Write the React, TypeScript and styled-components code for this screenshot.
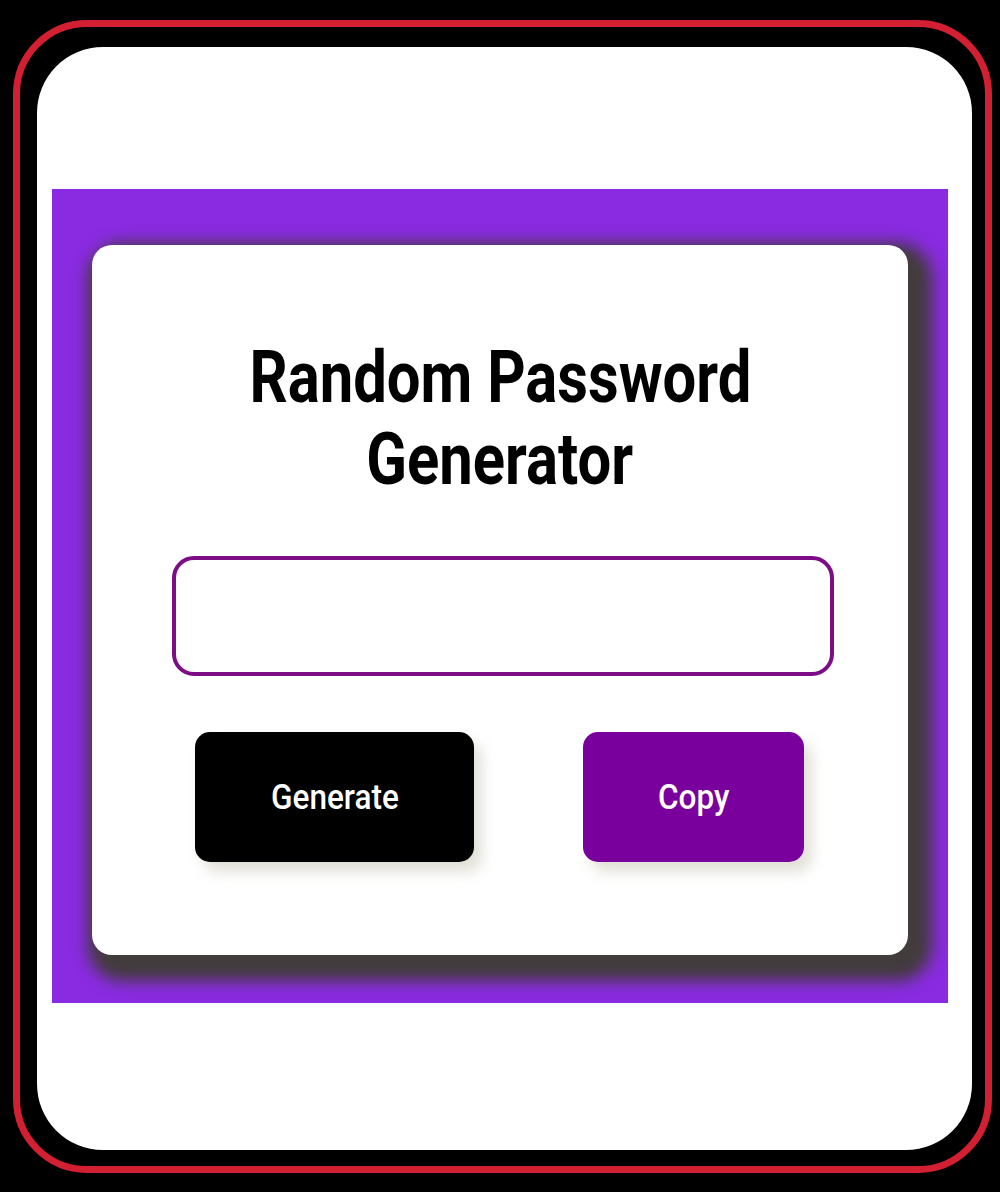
import React from "react";
import styled, { createGlobalStyle } from "styled-components";

const GlobalStyle = createGlobalStyle`
  html, body {
    margin: 0;
    padding: 0;
    background: #000;
  }
  body {
    font-family: Roboto, "Noto Sans", sans-serif;
  }
`;

const Screen = styled.div`
  width: 1000px;
  height: 1192px;
  background: #000;
  box-sizing: border-box;
  padding: 20px 8px 19px 13px;
`;

const RedFrame = styled.div`
  width: 979px;
  height: 1153px;
  box-sizing: border-box;
  border: 7px solid #d21f32;
  border-radius: 74px;
  padding: 20px 13px 15px 17px;
`;

const Sheet = styled.div`
  width: 935px;
  height: 1103px;
  background: #fff;
  border-radius: 66px;
  box-sizing: border-box;
  padding: 142px 24px 0 15px;
`;

const Stage = styled.div`
  width: 896px;
  height: 814px;
  background: #8a2be2;
  box-sizing: border-box;
  padding: 56px 40px 0 40px;
`;

const Card = styled.div`
  width: 816px;
  height: 710px;
  background: #fff;
  border-radius: 20px;
  box-shadow: 10px 12px 16px 14px rgba(66, 60, 60, 1);
  box-sizing: border-box;
  padding-top: 92px;
  display: flex;
  flex-direction: column;
  align-items: center;
`;

const Squeeze = styled.span<{ $x: number }>`
  display: inline-block;
  transform: scaleX(${(p) => p.$x});
  transform-origin: center;
  white-space: nowrap;
`;

const Title = styled.h1`
  margin: 0;
  font-family: Roboto, sans-serif;
  font-weight: 700;
  font-size: 72px;
  line-height: 82px;
  color: #000;
  text-align: center;
  display: flex;
  flex-direction: column;
  align-items: center;
`;

const PasswordField = styled.input`
  margin-top: 55px;
  margin-left: 6px;
  width: 662px;
  height: 120px;
  box-sizing: border-box;
  border: 4px solid #7d0c87;
  border-radius: 22px;
  background: #fff;
  outline: none;
  font-family: Roboto, sans-serif;
  font-size: 32px;
  padding: 0 24px;
`;

const ButtonRow = styled.div`
  margin-top: 56px;
  width: 100%;
  box-sizing: border-box;
  padding: 0 104px 0 103px;
  display: flex;
  justify-content: space-between;
`;

const ActionButton = styled.button<{ $bg: string; $w: number }>`
  width: ${(p) => p.$w}px;
  height: 130px;
  border: none;
  border-radius: 15px;
  background: ${(p) => p.$bg};
  color: #fff;
  font-family: Roboto, sans-serif;
  font-weight: 500;
  font-size: 35px;
  box-shadow: 8px 10px 14px rgba(170, 165, 140, 0.35);
  display: flex;
  align-items: center;
  justify-content: center;
  padding: 0;
  cursor: pointer;
`;

export default function App() {
  return (
    <>
      <GlobalStyle />
      <Screen>
        <RedFrame>
          <Sheet>
            <Stage>
              <Card>
                <Title>
                  <Squeeze $x={0.83}>Random Password</Squeeze>
                  <Squeeze $x={0.83}>Generator</Squeeze>
                </Title>
                <PasswordField type="text" readOnly />
                <ButtonRow>
                  <ActionButton $bg="#000" $w={279}>
                    <Squeeze $x={0.9}>Generate</Squeeze>
                  </ActionButton>
                  <ActionButton $bg="#7a009e" $w={221}>
                    <Squeeze $x={0.9}>Copy</Squeeze>
                  </ActionButton>
                </ButtonRow>
              </Card>
            </Stage>
          </Sheet>
        </RedFrame>
      </Screen>
    </>
  );
}
